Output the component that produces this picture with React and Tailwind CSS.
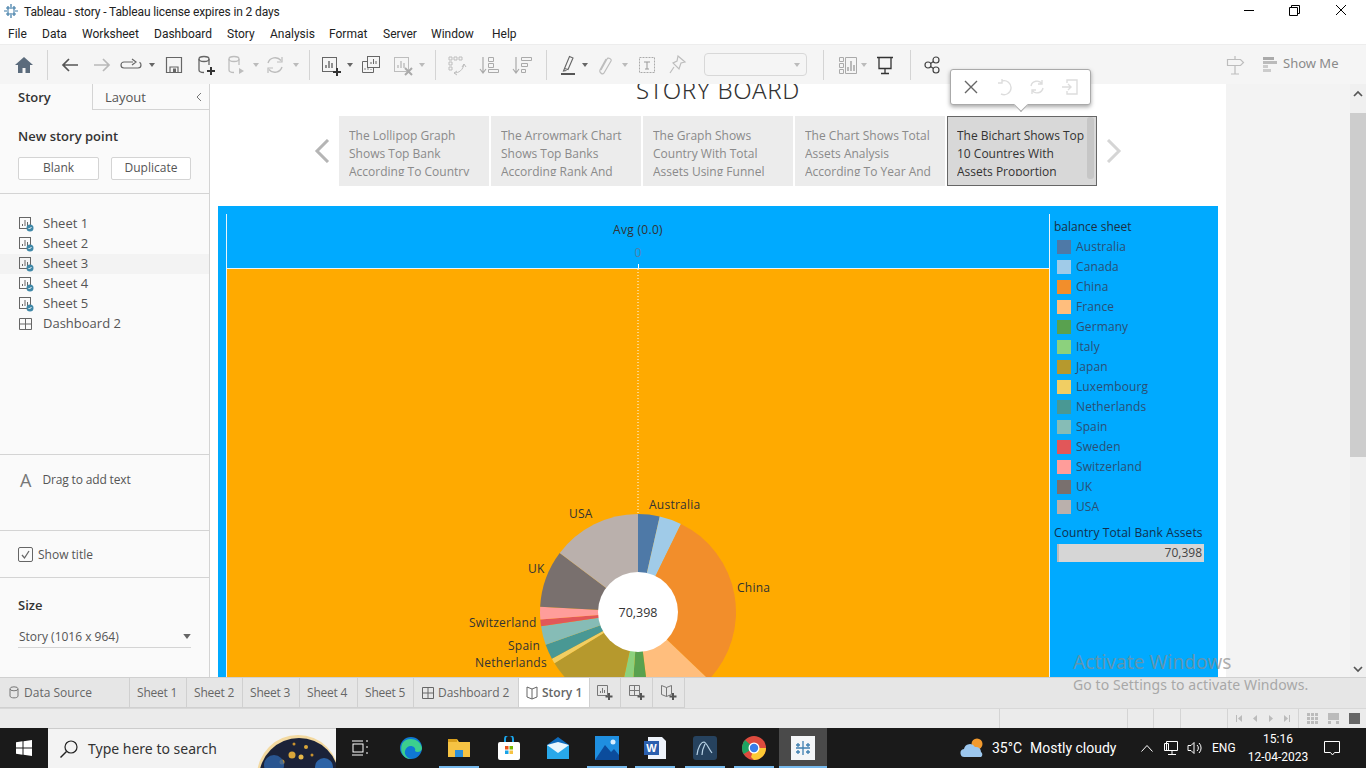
import React from 'react';

const ui = "font-['Roboto','Noto_Sans',sans-serif]";
const tb = "font-['Open_Sans','Noto_Sans',sans-serif]";

const menus = [
  ['File', 34], ['Data', 40], ['Worksheet', 72], ['Dashboard', 73], ['Story', 43],
  ['Analysis', 59], ['Format', 54], ['Server', 48], ['Window', 61], ['Help', 40],
];

const thumbs = [
  ['The Lollipop Graph', 'Shows Top Bank', 'According To Country'],
  ['The Arrowmark Chart', 'Shows Top Banks', 'According Rank And'],
  ['The Graph Shows', 'Country With Total', 'Assets Using Funnel'],
  ['The Chart Shows Total', 'Assets Analysis', 'According To Year And'],
  ['The Bichart Shows Top', '10 Countres With', 'Assets Proportion'],
];

const legend = [
  ['Australia', '#4e79a7'], ['Canada', '#a0cbe8'], ['China', '#f28e2b'], ['France', '#ffbe7d'],
  ['Germany', '#59a14f'], ['Italy', '#8cd17d'], ['Japan', '#b6992d'], ['Luxembourg', '#f1ce63'],
  ['Netherlands', '#499894'], ['Spain', '#86bcb6'], ['Sweden', '#e15759'], ['Switzerland', '#ff9d9a'],
  ['UK', '#79706e'], ['USA', '#bab0ac'],
];

// end angle of each slice, clockwise from 12 o'clock
const sliceEnds = [12.8, 26, 133.7, 173, 184, 192, 238.5, 241.5, 250.4, 261.7, 265.6, 273, 307, 360];

const pieLabels = [
  ['Australia', 422, 240], ['USA', 342, 249], ['UK', 301, 304], ['China', 510, 323],
  ['Switzerland', 242, 358], ['Spain', 281, 381], ['Netherlands', 248, 398],
];

function slicePath(cx, cy, r, a0, a1) {
  const p = (a) => {
    const t = (a * Math.PI) / 180;
    return `${(cx + r * Math.sin(t)).toFixed(2)} ${(cy - r * Math.cos(t)).toFixed(2)}`;
  };
  return `M${cx} ${cy}L${p(a0)}A${r} ${r} 0 ${a1 - a0 > 180 ? 1 : 0} 1 ${p(a1)}Z`;
}

const Svg = ({ size = 24, w, h, vb = '0 0 24 24', children, className = '' }) => (
  <svg width={w || size} height={h || size} viewBox={vb} fill="none" className={`shrink-0 ${className}`}>
    {children}
  </svg>
);

const Sep = ({ className }) => <div className={`w-px h-[30px] bg-[#d4d4d4] ${className}`} />;

const Caret = ({ className, color = '#666' }) => (
  <svg width="6" height="4" viewBox="0 0 6 4" className={`shrink-0 ${className}`}>
    <path d="M0 0h6L3 4z" fill={color} />
  </svg>
);

const Dsk = ({ c }) => (
  <>
    <ellipse cx="10" cy="6" rx="5" ry="2.5" stroke={c} strokeWidth="1.3" />
    <path d="M5 6v11c0 1.4 2.2 2.5 5 2.5M15 6v6" stroke={c} strokeWidth="1.3" />
  </>
);

const SheetGlyph = ({ c = '#666' }) => (
  <>
    <rect x="3.5" y="4.5" width="14" height="14" stroke={c} />
    <path d="M7 15v-3M10 15V8M13 15v-5" stroke={c} strokeWidth="1.4" />
  </>
);

function Toolbar() {
  return (
    <div className="h-[40px] bg-[#f5f5f5] flex items-center border-t border-[#ededed]">
      <Svg className="ml-[12px]"><path d="M12 4 3 12h3v8h4.5v-5h3v5H18v-8h3z" fill="#5b6b7c" /></Svg>
      <Sep className="ml-[11px]" />
      <Svg className="ml-[10px]"><path d="M20 12H5M11 6l-6 6 6 6" stroke="#555" strokeWidth="1.7" /></Svg>
      <Svg className="ml-[8px]"><path d="M4 12h15M13 6l6 6-6 6" stroke="#b9b9b9" strokeWidth="1.7" /></Svg>
      <Svg className="ml-[5px]"><path d="M14 9H5a3 3 0 0 0 0 6h14a3 3 0 0 0 3-3c0-1.2-.6-2.300-1.500-2.800M13 6l4 3-4 3" stroke="#666" strokeWidth="1.200" /></Svg>
      <Caret className="ml-[6px]" />
      <Svg className="ml-[7px]"><path d="M4.500 4.500h15v15h-15zM8 19v-5h8v5" stroke="#666" strokeWidth="1.2" /><rect x="11" y="15.500" width="3" height="3.500" fill="#666" /></Svg>
      <Svg className="ml-[8px]"><Dsk c="#666" /><path d="M17 14v8M13 18h8" stroke="#333" strokeWidth="2" /></Svg>
      <Svg className="ml-[6px]"><Dsk c="#bdbdbd" /><path d="M15 15v6l5-3z" fill="#bdbdbd" /></Svg>
      <Caret className="ml-[5px]" color="#bbb" />
      <Svg className="ml-[4px]"><path d="M5 10a7.500 7.500 0 0 1 13-2.500M19 14a7.500 7.500 0 0 1-13 2.500" stroke="#bdbdbd" strokeWidth="1.4" /><path d="M19 4v5h-5M5 20v-5h5" stroke="#bdbdbd" strokeWidth="1.2" /></Svg>
      <Caret className="ml-[6px]" color="#bbb" />
      <Sep className="ml-[10px]" />
      <Svg className="ml-[9px]"><SheetGlyph /><path d="M18 15v8M14 19h8" stroke="#333" strokeWidth="2" /></Svg>
      <Caret className="ml-[4px]" />
      <Svg className="ml-[6px]"><rect x="8.500" y="3.500" width="12" height="11" fill="#f5f5f5" stroke="#666" /><path d="M12 11V9M14.500 11V6M17 11V8" stroke="#666" /><path d="M8 8.500H3.500v11h11V15" stroke="#666" /><path d="M6 17v-2M9 17v-2M12 17v-1" stroke="#888" /></Svg>
      <Svg className="ml-[8px]"><SheetGlyph c="#bdbdbd" /><path d="m14 15 7 7m0-7-7 7" stroke="#aaa" strokeWidth="2" /></Svg>
      <Caret className="ml-[4px]" color="#bbb" />
      <Sep className="ml-[10px]" />
      <Svg className="ml-[9px]"><path d="M4 4h3v3H4zM9 4h3v3H9zM14 4h3v3h-3zM4 9h3v3H4zM4 14h3v3H4zM9 20c5 0 9-3 10-9M19 11l-2 3M19 11l2 3M9 20l3-2M9 20l3 2" stroke="#bdbdbd" /></Svg>
      <Svg className="ml-[8px]"><path d="M6 4v15M3 16l3 4 3-4" stroke="#aaa" strokeWidth="1.2" /><path d="M11.500 4.500h5v4h-5zM11.500 10.500h5v4h-5zM11.500 16.500h10v3h-10z" stroke="#aaa" /></Svg>
      <Svg className="ml-[9px]"><path d="M6 4v15M3 16l3 4 3-4" stroke="#aaa" strokeWidth="1.2" /><path d="M11.500 4.500h10v3h-10zM11.500 10.500h6v3h-6zM11.500 16.500h4v3h-4z" stroke="#aaa" /></Svg>
      <Sep className="ml-[12px]" />
      <Svg className="ml-[9px]"><path d="M8.500 15.500 13.500 3.500l3.500 1.500-5 11.500zM8.500 15.500l-1 2.500 3-.5" stroke="#666" strokeWidth="1.100" /><path d="M5 21h14" stroke="#555" strokeWidth="2" /></Svg>
      <Caret className="ml-[2px]" />
      <Svg className="ml-[5px]"><path d="m8 17 6-11c1-2 5 0 4 2l-7 12c-1 2-5 0-4-3l6-11" stroke="#bdbdbd" strokeWidth="1.2" /></Svg>
      <Caret className="ml-[5px]" color="#bbb" />
      <Svg className="ml-[7px]"><rect x="4.500" y="4.500" width="15" height="15" stroke="#aaa" strokeDasharray="2 1" /><path d="M9 9h6M12 9v7M10 16h4" stroke="#999" /></Svg>
      <Svg className="ml-[6px]"><path d="m13 3 7 6-4 1-2 6-6-6 4-2zM9 14l-4 6" stroke="#bdbdbd" strokeWidth="1.2" /></Svg>
      <div className="ml-[15px] w-[103px] h-[23px] border border-[#d8d8d8] rounded-sm flex items-center justify-end pr-[6px]">
        <Caret color="#bbb" />
      </div>
      <Sep className="ml-[16px]" />
      <Svg className="ml-[12px]"><path d="M3.500 4.500h4v4h-4zM3.500 10.500h4v4h-4zM3.500 16.500h4v4h-4zM9.500 4.500h11v16h-11z" stroke="#aaa" /><path d="M12 18v-4M15 18V8M18 18v-6" stroke="#999" strokeWidth="1.300" /></Svg>
      <Caret className="ml-[1px]" color="#bbb" />
      <Svg className="ml-[6px]"><path d="M4 4.500h16M6 4.500v11h12v-11M12 15.500V20M8 20.500h8" stroke="#333" strokeWidth="1.300" /></Svg>
      <Sep className="ml-[13px]" />
      <Svg className="ml-[9px]"><circle cx="8" cy="12" r="3" stroke="#444" strokeWidth="1.200" /><circle cx="16" cy="7" r="3" stroke="#444" strokeWidth="1.200" /><circle cx="16" cy="17" r="3" stroke="#444" strokeWidth="1.200" /><path d="m10.500 10.500 3-2M10.500 13.500l3 2" stroke="#444" strokeWidth="1.200" /></Svg>
      <Svg className="ml-[279px]"><path d="M4.500 6.500h13l3 3-3 3h-13zM12 3v3M12 13v8M8 21h8" stroke="#bdbdbd" strokeWidth="1.200" /></Svg>
      <div className="ml-[16px] flex flex-col gap-[1px] w-[14px]">
        <div className="h-[3px] w-[11px] bg-[#aaa]" />
        <div className="h-[3px] w-[14px] bg-[#bbb]" />
        <div className="h-[3px] w-[5px] bg-[#ccc]" />
        <div className="h-[3px] w-[8px] bg-[#ccc]" />
      </div>
      <span className={`ml-[6px] pb-[2px] text-[13px] text-[#8a8a8a] font-['Noto_Sans',sans-serif]`}>Show Me</span>
    </div>
  );
}

const SheetIcon = () => (
  <Svg size={16} vb="0 0 16 16">
    <rect x="1.500" y="1.500" width="11" height="11" stroke="#666" />
    <path d="M4.500 10V8M7 10V4M9.500 10V6" stroke="#666" />
    <circle cx="12" cy="12" r="3.500" fill="#3f88a8" />
    <path d="m10.500 12 1 1 2-2" stroke="#fff" />
  </Svg>
);

function Sidebar() {
  const sheets = ['Sheet 1', 'Sheet 2', 'Sheet 3', 'Sheet 4', 'Sheet 5'];
  return (
    <aside className={`w-[210px] shrink-0 bg-[#fafafa] border-r border-[#d4d4d4] flex flex-col text-[#555] text-[12px] ${tb}`}>
      <div className="h-[26px] flex text-[13px] shrink-0">
        <div className="w-[93px] pl-[18px] leading-[26px] font-semibold text-[#333] border-r border-[#d4d4d4]">Story</div>
        <div className="flex-1 pl-[12px] leading-[26px] border-b border-[#d4d4d4] flex justify-between pr-[7px]">
          Layout
          <svg width="7" height="26" viewBox="0 0 7 26"><path d="M6 9 2 13l4 4" stroke="#777" fill="none" /></svg>
        </div>
      </div>
      <div className="h-[84px] shrink-0 border-b border-[#d4d4d4] pl-[18px] pt-[17px]">
        <div className="text-[13px] leading-[18px] font-semibold text-[#333]">New story point</div>
        <div className="flex gap-[12px] mt-[12px]">
          <div className="w-[81px] h-[23px] bg-white border border-[#d4d4d4] rounded-[2px] text-center leading-[20px]">Blank</div>
          <div className="w-[80px] h-[23px] bg-white border border-[#d4d4d4] rounded-[2px] text-center leading-[20px]">Duplicate</div>
        </div>
      </div>
      <div className="h-[261px] shrink-0 border-b border-[#d4d4d4] pt-[20px] text-[13px]">
        {sheets.map((s) => (
          <div key={s} className={`h-[20px] pl-[18px] flex items-center gap-[9px] ${s === 'Sheet 3' ? 'bg-[#f3f3f3]' : ''}`}>
            <SheetIcon />
            {s}
          </div>
        ))}
        <div className="h-[20px] pl-[18px] flex items-center gap-[9px]">
          <Svg size={16} vb="0 0 16 16">
            <path d="M1.500 2.500h12v11h-12zM7.500 2.500v11M1.500 8h12" stroke="#666" />
          </Svg>
          Dashboard 2
        </div>
      </div>
      <div className="h-[76px] shrink-0 border-b border-[#d4d4d4] pl-[20px] pt-[13px] flex items-start gap-[11px]">
        <span className="text-[18px] leading-[24px] text-[#777]">A</span>
        <span className="leading-[24px] tracking-[-0.15px]">Drag to add text</span>
      </div>
      <div className="h-[47px] shrink-0 border-b border-[#d4d4d4] pl-[18px] pt-[1px] flex items-center gap-[5px]">
        <div className="w-[15px] h-[15px] border border-[#666] rounded-[2px] flex items-center justify-center">
          <svg width="11" height="11" viewBox="0 0 11 11"><path d="m2 6 2.500 3L9 2" stroke="#666" strokeWidth="1.300" fill="none" /></svg>
        </div>
        Show title
      </div>
      <div className="flex-1 pl-[18px] pr-[18px] pt-[18px]">
        <div className="text-[13px] leading-[18px] font-semibold text-[#333]">Size</div>
        <div className="mt-[12px] h-[22px] border-b border-[#d4d4d4] flex items-center justify-between pl-[1px]">
          Story (1016 x 964)
          <Caret className="w-[8px] h-[5px]" />
        </div>
      </div>
    </aside>
  );
}

function PieChart() {
  let start = 0;
  return (
    <svg width="822" height="408" viewBox="0 0 822 408" className="block">
      <path d="M411 0V245" stroke="#fff" strokeDasharray="1 2" />
      {legend.map(([name, color], i) => {
        const d = slicePath(411, 343, 98, start, sliceEnds[i]);
        start = sliceEnds[i];
        return <path key={name} d={d} fill={color} />;
      })}
      <circle cx="411" cy="343" r="40" fill="#fff" />
      <text x="411" y="347.500" textAnchor="middle" fontSize="12.500" fill="#333" fontFamily="Open Sans">70,398</text>
      {pieLabels.map(([t, x, y]) => (
        <text key={t} x={x} y={y} fontSize="12" letterSpacing="0.25" fill="#333" fontFamily="Open Sans">{t}</text>
      ))}
    </svg>
  );
}

function Story() {
  return (
    <div className="w-[1016px] shrink-0 bg-white overflow-hidden">
      <h1 className={`text-center text-[24px] leading-[32px] -mt-[10px] tracking-[0.7px] font-light text-[#333] font-['Noto_Sans',sans-serif]`}>STORY BOARD</h1>
      <div className="mt-[10px] flex justify-center items-center gap-[9px]">
        <svg width="16" height="24" viewBox="0 0 16 24"><path d="M14 1 3 12l11 11" stroke="#b5b5b5" strokeWidth="3" fill="none" /></svg>
        <div className="flex gap-[2px]">
          {thumbs.map((lines, i) => (
            <div key={i} className={`w-[150px] h-[70px] relative text-[12px] leading-[18px] ${tb} ${i === 4 ? 'bg-[#d8d8d8] border border-[#666] text-[#333] pl-[9px] pt-[10px]' : 'bg-[#ececec] text-[#8a8a8a] pl-[10px] pt-[11px]'}`}>
              <div className="h-[49px] overflow-hidden whitespace-nowrap">
                {lines.map((l) => <div key={l}>{l}</div>)}
              </div>
              {i === 4 && <div className="absolute right-[2px] top-0 w-[7px] h-[62px] bg-[#c6c6c6] rounded-[3px]" />}
            </div>
          ))}
        </div>
        <svg width="16" height="24" viewBox="0 0 16 24"><path d="m2 1 11 11L2 23" stroke="#d5d5d5" strokeWidth="3" fill="none" /></svg>
      </div>
      <div className={`mt-[20px] ml-[8px] w-[1000px] h-[480px] bg-[#00aaff] pt-[8px] pl-[8px] flex ${tb}`}>
        <div className="w-[824px] shrink-0 border-x border-[#e8f4fb] flex flex-col">
          <div className="h-[55px] shrink-0 border-b border-[#e8f4fb] flex flex-col items-center text-[12px] text-[#333]">
            <div className="mt-[7px] leading-[18px] tracking-[0.3px]">Avg (0.0)</div>
            <div className="mt-[8px] leading-[12px] text-[#4f7fa8]">0</div>
            <div className="mt-[5px] w-px h-[4px] bg-white" />
          </div>
          <div className="flex-1 bg-[#ffaa00]"><PieChart /></div>
        </div>
        <div className="pl-[4px] pt-[4px] text-[12px]">
          <div className="leading-[18px] text-[#1c2f44]">balance sheet</div>
          <div className="mt-[1px]">
            {legend.map(([name, color]) => (
              <div key={name} className="h-[20px] pl-[3px] flex items-center gap-[5px] text-[#2a4f75] tracking-[0.1px]">
                <div className="w-[14px] h-[14px]" style={{ backgroundColor: color }} />
                {name}
              </div>
            ))}
          </div>
          <div className="mt-[7px] leading-[18px] text-[#10304f] whitespace-nowrap tracking-[0.12px]">Country Total Bank Assets</div>
          <div className="ml-[3px] mt-[2px] w-[147px] h-[18px] bg-[#d6d6d6] border-l-2 border-[#bbb] text-right pr-[2px] leading-[18px] text-[#444]">70,398</div>
        </div>
      </div>
    </div>
  );
}

function Scrollbar() {
  return (
    <div className="w-[16px] shrink-0 bg-[#f0f0f0] flex flex-col items-center">
      <svg width="16" height="29" viewBox="0 0 16 29" className="shrink-0"><path d="m4 12 4-4 4 4" stroke="#555" strokeWidth="1.700" fill="none" /></svg>
      <div className="w-full h-[344px] bg-[#cdcdcd]" />
      <div className="flex-1" />
      <svg width="16" height="18" viewBox="0 0 16 18" className="shrink-0"><path d="m4 8 4 4 4-4" stroke="#555" strokeWidth="1.700" fill="none" /></svg>
    </div>
  );
}

const tabs = [['Sheet 1', 57], ['Sheet 2', 56], ['Sheet 3', 57], ['Sheet 4', 58], ['Sheet 5', 56]];

function TabBar() {
  return (
    <div className={`h-[31px] shrink-0 bg-[#e6e6e6] border-t border-[#d0d0d0] flex text-[12px] text-[#666] ${tb}`}>
      <div className="w-[130px] h-[30px] border-r border-b border-[#d0d0d0] pl-[9px] flex items-center gap-[5px]">
        <svg width="10" height="13" viewBox="0 0 10 13" fill="none"><ellipse cx="5" cy="2.800" rx="4" ry="2" stroke="#777" /><path d="M1 3v7c0 2.500 8 2.500 8 0V3" stroke="#777" /></svg>
        Data Source
      </div>
      {tabs.map(([t, w]) => (
        <div key={t} className="h-[30px] border-r border-b border-[#d0d0d0] flex items-center pl-[7px] tracking-[-0.2px]" style={{ width: w }}>{t}</div>
      ))}
      <div className="w-[105px] h-[30px] border-r border-b border-[#d0d0d0] flex items-center pl-[8px] gap-[4px] tracking-[-0.05px]">
        <svg width="12" height="12" viewBox="0 0 12 12" fill="none"><path d="M.5.500h11v11H.5zM6 .5v11M.5 6h11" stroke="#666" /></svg>
        Dashboard 2
      </div>
      <div className="w-[71px] h-[30px] bg-white border-r border-b border-[#d0d0d0] flex items-center pl-[7px] gap-[4px] font-semibold">
        <svg width="12" height="14" viewBox="0 0 12 14" fill="none"><path d="M6 3 1 1v10l5 2 5-2V1zM6 3v10" stroke="#666" /></svg>
        Story 1
      </div>
      {[31, 32, 32].map((w, i) => (
        <div key={i} className="h-[30px] border-r border-b border-[#d0d0d0] flex items-center justify-center" style={{ width: w }}>
          <svg width="18" height="18" viewBox="0 0 18 18" fill="none">
            {i === 0 && <path d="M1.500 1.500h10v10h-10zM4.500 9V7M6.500 9V4M8.500 9V6" stroke="#777" />}
            {i === 1 && <path d="M1.500 1.500h10v10h-10zM6.500 1.500v10M1.500 6.500h10" stroke="#777" />}
            {i === 2 && <path d="M6.500 3.500 1.500 1.500v9l5 2 5-2v-9zM6.500 3.500v9" stroke="#777" />}
            <path d="M13 9v7M9.500 12.500h7" stroke="#555" strokeWidth="2" />
          </svg>
        </div>
      ))}
    </div>
  );
}

function StatusBar() {
  const cell = 'h-full border-l border-[#d4d4d4]';
  return (
    <div className="h-[20px] shrink-0 bg-[#ebebeb] flex border-t border-[#d8d8d8]">
      <div className="w-[999px]" />
      <div className={`${cell} w-[128px]`} />
      <div className={`${cell} w-[26px]`} />
      <div className={`${cell} w-[27px]`} />
      <div className={`${cell} w-[47px]`} />
      <div className={`${cell} w-[71px] flex items-center pl-[8px]`}>
        <svg width="54" height="9" viewBox="0 0 54 9" fill="#bbb"><path d="M0 1h1v7H0zM6 1v7L2 4.500zM21 1v7l-4-3.500zM33 1v7l4-3.500zM48 1v7l4-3.500zM53 1h1v7h-1z" /></svg>
      </div>
      <div className={`${cell} flex-1 flex items-center gap-[10px] pl-[8px]`}>
        <div className="w-[11px] h-[11px] grid grid-cols-3 gap-[1px]">
          {Array.from({ length: 9 }).map((_, i) => <div key={i} className="bg-[#bbb]" />)}
        </div>
        <div className="w-[11px] h-[11px] flex flex-col gap-[1px]">
          <div className="h-[7px] bg-[#bbb]" />
          <div className="h-[3px] border-l-[3px] border-r-[3px] border-[#bbb]" />
        </div>
        <div className="w-[11px] h-[11px] bg-[#666]" />
      </div>
    </div>
  );
}

const TaskSlot = ({ x, active, open, children }) => (
  <div className={`relative h-[40px] w-[48px] flex items-center justify-center shrink-0 ${active ? 'bg-[#4a4a4a]' : ''} ${x}`}>
    {children}
    {open && <div className="absolute left-[4px] right-[4px] bottom-0 h-[2px] bg-[#76b9ed]" />}
    {active && <div className="absolute left-0 right-0 bottom-0 h-[2px] bg-[#76b9ed]" />}
  </div>
);

function Taskbar() {
  return (
    <div className={`h-[40px] shrink-0 bg-[#1a1a1a] flex items-center text-white ${ui}`}>
      <div className="w-[48px] h-[40px] flex items-center justify-center">
        <svg width="16" height="16" viewBox="0 0 16 16" fill="#fff"><path d="M0 2.200 6.500 1.300v6.300H0zM7.500 1.200 16 0v7.600H7.500zM0 8.500h6.500v6.200L0 13.800zM7.500 8.500H16V16l-8.500-1.200z" /></svg>
      </div>
      <div className="relative w-[288px] h-[40px] bg-[#f3f3f3] border-t border-[#ccc] flex items-center pl-[11px] overflow-hidden font-['Noto_Sans',sans-serif]">
        <svg width="20" height="20" viewBox="0 0 20 20" fill="none"><circle cx="12" cy="8" r="6" stroke="#222" strokeWidth="1.200" /><path d="M7.500 12.500 1.500 18.500" stroke="#222" strokeWidth="1.400" /></svg>
        <span className="ml-[9px] text-[14px] text-[#333]">Type here to search</span>
        <svg width="80" height="40" viewBox="0 0 80 40" className="absolute right-0 top-0">
          <circle cx="42" cy="47" r="41" fill="#f3d9a0" />
          <circle cx="43" cy="49" r="40" fill="#1b2238" />
          <circle cx="36" cy="26" r="3.500" fill="#d9a63a" /><circle cx="45" cy="28" r="2.500" fill="#e6b84a" />
          <circle cx="26" cy="33" r="2.500" fill="#c8922e" /><circle cx="50" cy="18" r="2" fill="#d9a63a" />
          <circle cx="38" cy="15" r="1.500" fill="#c8922e" /><circle cx="56" cy="26" r="1.500" fill="#c8922e" />
          <circle cx="18" cy="36" r="10" fill="#2d63a6" opacity="0.8" />
          <circle cx="68" cy="38" r="9" fill="#2d63a6" />
        </svg>
      </div>
      <TaskSlot x="">
        <svg width="18" height="16" viewBox="0 0 18 16" fill="none" stroke="#fff"><path d="M1 1h11M1 15h11" /><rect x="2" y="4" width="10" height="8" /><path d="M15 1h2M15 7h2M15 13h2" /></svg>
      </TaskSlot>
      <TaskSlot x="ml-[3px]">
        <svg width="24" height="24" viewBox="0 0 24 24"><circle cx="12" cy="12" r="11" fill="#0f78d4" /><path d="M3 8c4-8 18-6 20 4 0 4-5 5-7 3 2-5-8-8-10 0-1 4 3 8 7 8-7 1-13-6-10-15z" fill="#3ccf8e" /></svg>
      </TaskSlot>
      <TaskSlot x="" open>
        <svg width="24" height="22" viewBox="0 0 24 22"><path d="M1 2h9l2 3h11v15H1z" fill="#f6c343" /><path d="M1 2h9v3H1z" fill="#d99f1c" /><path d="M8 13h8v7H8z" fill="#2b8fd9" /></svg>
      </TaskSlot>
      <TaskSlot x="ml-[2px]">
        <svg width="22" height="24" viewBox="0 0 22 24" fill="none"><path d="M7 6V3a4 4 0 0 1 8 0v3" stroke="#1aa3e8" strokeWidth="2" /><rect x="0" y="6" width="22" height="18" rx="2" fill="#fff" /><path d="M7 10h3.500v3.500H7z" fill="#e8541c" /><path d="M11.500 10H15v3.500h-3.500z" fill="#76b900" /><path d="M7 14.500h3.500V18H7z" fill="#1aa3e8" /><path d="M11.500 14.500H15V18h-3.500z" fill="#f6c343" /></svg>
      </TaskSlot>
      <TaskSlot x="ml-[1px]">
        <svg width="24" height="24" viewBox="0 0 24 24"><path d="M12 1 23 9v14H1V9z" fill="#0f6cbd" /><path d="M1 9h22v14H1z" fill="#28a8ea" /><path d="m1 9 11 8 11-8-11-3z" fill="#e8f6fd" /></svg>
      </TaskSlot>
      <TaskSlot x="ml-[1px]" open>
        <svg width="24" height="24" viewBox="0 0 24 24"><rect width="24" height="24" fill="#1f8fe0" /><path d="M0 24 10 9l6 7 3-3 5 6v5z" fill="#0b4c9c" /><circle cx="18" cy="6" r="2.500" fill="#d8efff" /></svg>
      </TaskSlot>
      <TaskSlot x="" open>
        <svg width="24" height="24" viewBox="0 0 24 24"><path d="M5 1h14l4 4v18H5z" fill="#eef3fa" /><rect x="1" y="5" width="15" height="14" fill="#2b5fae" /><text x="8.500" y="16" textAnchor="middle" fontSize="11" fontWeight="700" fill="#fff" fontFamily="Liberation Sans">W</text></svg>
      </TaskSlot>
      <TaskSlot x="ml-[2px]" open>
        <svg width="24" height="24" viewBox="0 0 24 24" fill="none"><rect width="24" height="24" rx="3" fill="#26425e" /><path d="M4 19c1-8 4-13 7-13 3 1 4 6 8 11M12 8c-2 4-3 7-3 11" stroke="#b9d3e6" strokeWidth="1.200" /></svg>
      </TaskSlot>
      <TaskSlot x="ml-[1px]" open>
        <svg width="24" height="24" viewBox="0 0 24 24"><circle cx="12" cy="12" r="12" fill="#dd4b3e" /><path d="M12 12 1.600 18A12 12 0 0 1 3 4z" fill="#1ea362" /><path d="M12 12h12a12 12 0 0 1-12 12l-3-3z" fill="#fcc934" /><circle cx="12" cy="12" r="5.500" fill="#fff" /><circle cx="12" cy="12" r="4.200" fill="#3a7de8" /></svg>
      </TaskSlot>
      <TaskSlot x="ml-[1px]" active>
        <svg width="24" height="24" viewBox="0 0 24 24" fill="none"><rect width="24" height="24" fill="#f4f6f8" /><path d="M12 5v14M5 12h14M7 7v4M5 9h4M17 7v4M15 9h4M7 14v4M5 16h4M17 14v4M15 16h4" stroke="#3f7fb0" strokeWidth="1.300" /></svg>
      </TaskSlot>
      <div className="ml-[133px] shrink-0">
        <svg width="26" height="22" viewBox="0 0 26 22"><circle cx="17" cy="7" r="5.500" fill="#f29a2e" /><path d="M5 20a4 4 0 0 1-1-8 6 6 0 0 1 11-2 5 5 0 0 1 6 5 3 3 0 0 1 0 5z" fill="#9cc7ee" /></svg>
      </div>
      <span className="ml-[6px] w-[38px] text-[14px] whitespace-nowrap">35°C</span>
      <span className="w-[100px] text-[14px] whitespace-nowrap">Mostly cloudy</span>
      <svg width="12" height="7" viewBox="0 0 12 7" fill="none" className="ml-[11px] shrink-0"><path d="m.5 6.500 5.500-6 5.500 6" stroke="#fff" /></svg>
      <svg width="16" height="16" viewBox="0 0 16 16" fill="none" stroke="#fff" className="ml-[10px] shrink-0"><path d="M3.500 1.500h11v9h-11zM1.500 3.500h4v7h-4zM9 10.500v4M5 14.500h8" /></svg>
      <svg width="16" height="16" viewBox="0 0 16 16" fill="none" stroke="#fff" className="ml-[8px] shrink-0"><path d="M1 5.500h3l3-3v11l-3-3H1zM10 5a4 4 0 0 1 0 6M12 3a7 7 0 0 1 0 10" /></svg>
      <span className="ml-[9px] text-[12px] w-[26px]">ENG</span>
      <div className="w-[80px] text-center text-[12px] leading-[18px]">
        <div>15:16</div>
        <div>12-04-2023</div>
      </div>
      <svg width="16" height="16" viewBox="0 0 16 16" fill="none" stroke="#fff" className="ml-[6px] shrink-0"><path d="M.5 1.500h15v11h-5l-2 2.500-2-2.500h-6z" /></svg>
    </div>
  );
}

export default function App() {
  return (
    <div className="relative w-[1366px] h-[768px] overflow-hidden bg-white flex flex-col">
      <div className={`h-[22px] shrink-0 flex items-center text-[12px] text-[#222] ${ui}`}>
        <svg width="16" height="16" viewBox="0 0 16 16" fill="none" className="ml-[3px]">
          <path d="M8 1v5M8 10v5M1 8h5M10 8h5M5 3v4M3 5h4M11 3v4M9 5h4M5 9v4M3 11h4M11 9v4M9 11h4" stroke="#3c7aa6" strokeWidth="1.200" />
        </svg>
        <span className="ml-[5px] pt-[2px] tracking-[-0.12px]">Tableau - story - Tableau license expires in 2 days</span>
        <div className="ml-auto mr-[2px] pb-[2px] flex items-center">
          <div className="w-[46px] flex justify-center"><div className="w-[10px] h-px bg-black" /></div>
          <div className="w-[45px] flex justify-center">
            <svg width="11" height="11" viewBox="0 0 11 11" fill="none" stroke="#000"><path d="M.5 2.500h8v8h-8zM2.500 2.500v-2h8v8h-2" /></svg>
          </div>
          <div className="w-[47px] flex justify-center">
            <svg width="12" height="12" viewBox="0 0 12 12" stroke="#000"><path d="m1 1 10 10M11 1 1 11" /></svg>
          </div>
        </div>
      </div>
      <div className={`h-[22px] shrink-0 flex items-center pl-[8px] pt-[1px] text-[12px] text-[#222] ${ui}`}>
        {menus.map(([m, w]) => <span key={m} style={{ width: w }}>{m}</span>)}
      </div>
      <Toolbar />
      <main className="h-[593px] shrink-0 flex overflow-hidden">
        <Sidebar />
        <Story />
        <div className="w-[124px] shrink-0 bg-[#f3f3f3]" />
        <Scrollbar />
      </main>
      <TabBar />
      <StatusBar />
      <Taskbar />

      {/* annotation popup over the story point */}
      <div className="absolute left-[950px] top-[69px] w-[141px] h-[36px] bg-white border border-[#aaa] rounded-[3px] shadow-[0_2px_4px_rgba(0,0,0,0.35)] flex items-center">
        <svg width="16" height="16" viewBox="0 0 16 16" stroke="#666" strokeWidth="1.400" className="ml-[12px]"><path d="m2 2 12 12M14 2 2 14" /></svg>
        <svg width="18" height="18" viewBox="0 0 18 18" fill="none" stroke="#ddd" strokeWidth="1.400" className="ml-[16px]"><path d="M7 3a7 7 0 1 1-1 13M7 1v4H3" /></svg>
        <svg width="18" height="18" viewBox="0 0 18 18" fill="none" stroke="#ddd" strokeWidth="1.400" className="ml-[15px]"><path d="M3 8a6 6 0 0 1 11-2M15 10a6 6 0 0 1-11 2M14 2v4h-4M4 16v-4h4" /></svg>
        <svg width="18" height="18" viewBox="0 0 18 18" fill="none" stroke="#ddd" strokeWidth="1.400" className="ml-[15px]"><path d="M6 5V2h10v14H6v-3M1 9h9M7 6l3 3-3 3" /></svg>
        <div className="absolute left-[65px] -bottom-[6px] w-[10px] h-[10px] bg-white border-r border-b border-[#aaa] rotate-45" />
      </div>

      <div className="absolute left-[1073px] top-[650px] text-[19.200px] leading-[24px] text-[#8c8c8c]/70 font-['Noto_Sans',sans-serif] pointer-events-none">Activate Windows</div>
      <div className="absolute left-[1073px] top-[676px] text-[14px] leading-[18px] tracking-[0.1px] text-[#a8a8a8] font-['Noto_Sans',sans-serif] pointer-events-none">Go to Settings to activate Windows.</div>
    </div>
  );
}
